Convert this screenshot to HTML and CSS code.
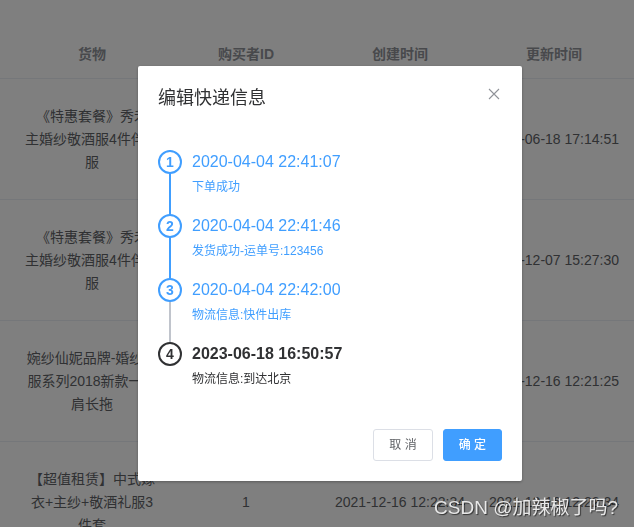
FILE: index.html
```html
<!DOCTYPE html>
<html lang="zh-CN">
<head>
<meta charset="UTF-8">
<meta name="viewport" content="width=device-width, initial-scale=1.0">
<title>订单管理</title>
<link rel="stylesheet" href="styles.css">
</head>
<body>

<div class="page">
    <table class="goods">
        <colgroup>
            <col class="col-name">
            <col class="col-mid">
            <col class="col-mid">
            <col class="col-last">
        </colgroup>
        <thead>
            <tr>
                <th>货物</th>
                <th>购买者ID</th>
                <th>创建时间</th>
                <th>更新时间</th>
            </tr>
        </thead>
        <tbody>
            <tr>
                <td>《特惠套餐》秀禾<br>主婚纱敬酒服4件伴娘<br>服</td>
                <td>1</td>
                <td>2021-12-07 15:27:30</td>
                <td>2023-06-18 17:14:51</td>
            </tr>
            <tr>
                <td>《特惠套餐》秀禾<br>主婚纱敬酒服4件伴娘<br>服</td>
                <td>1</td>
                <td>2021-12-07 15:27:30</td>
                <td>2021-12-07 15:27:30</td>
            </tr>
            <tr>
                <td>婉纱仙妮品牌-婚纱礼<br>服系列2018新款一字<br>肩长拖</td>
                <td>1</td>
                <td>2021-12-16 12:21:25</td>
                <td>2021-12-16 12:21:25</td>
            </tr>
            <tr>
                <td>【超值租赁】中式嫁<br>衣+主纱+敬酒礼服3<br>件套</td>
                <td>1</td>
                <td>2021-12-16 12:22:34</td>
                <td>2021-12-16 12:22:34</td>
            </tr>
        </tbody>
    </table>
</div>

<div class="modal"></div>

<div class="dialog-wrap">
    <div class="dialog">
        <div class="dialog-header">
            <span class="dialog-title">编辑快递信息</span>
            <button class="dialog-close" aria-label="关闭">
                <svg width="16" height="16" viewBox="0 0 16 16"><path d="M3 3 L13 13 M13 3 L3 13" stroke="#909399" stroke-width="1.1" fill="none"/></svg>
            </button>
        </div>

        <div class="dialog-body">
            <div class="steps">
                <div class="step finish">
                    <div class="step-head"><div class="step-line done"></div><div class="step-icon">1</div></div>
                    <div class="step-main">
                        <div class="step-title">2020-04-04 22:41:07</div>
                        <div class="step-desc">下单成功</div>
                    </div>
                </div>
                <div class="step finish">
                    <div class="step-head"><div class="step-line done"></div><div class="step-icon">2</div></div>
                    <div class="step-main">
                        <div class="step-title">2020-04-04 22:41:46</div>
                        <div class="step-desc">发货成功-运单号:123456</div>
                    </div>
                </div>
                <div class="step finish">
                    <div class="step-head"><div class="step-line"></div><div class="step-icon">3</div></div>
                    <div class="step-main">
                        <div class="step-title">2020-04-04 22:42:00</div>
                        <div class="step-desc">物流信息:快件出库</div>
                    </div>
                </div>
                <div class="step process">
                    <div class="step-head"><div class="step-line"></div><div class="step-icon">4</div></div>
                    <div class="step-main">
                        <div class="step-title">2023-06-18 16:50:57</div>
                        <div class="step-desc">物流信息:到达北京</div>
                    </div>
                </div>
            </div>
        </div>

        <div class="dialog-footer">
            <button class="btn">取 消</button>
            <button class="btn primary">确 定</button>
        </div>
    </div>
</div>

<div class="watermark">CSDN @加辣椒了吗?</div>

</body>
</html>
```

FILE: styles.css
```css
body { margin: 0; font-family: "Liberation Sans", Arial, "Noto Sans CJK SC", sans-serif; font-size: 14px; color: #606266; background: #fff; overflow: hidden; height: 527px; }

.page { padding-top: 31px; }
.goods { border-collapse: collapse; width: 634px; table-layout: fixed; }
.col-name { width: 169px; }
.col-mid { width: 154px; }
.col-last { width: 157px; }
.goods th, .goods td { padding: 0 10px; text-align: center; border-bottom: 1px solid #ebeef5; line-height: 23px; white-space: nowrap; overflow: visible; }
.goods th:first-child, .goods td:first-child { padding-left: 25px; }
.goods th:last-child, .goods td:last-child { padding-right: 13px; }
.goods th { padding-top: 12px; padding-bottom: 12px; color: #909399; font-weight: bold; }
.goods td { height: 120px; vertical-align: middle; }

.modal { position: fixed; left: 0; top: 0; right: 0; bottom: 0; background: #000; opacity: 0.5; }
.dialog-wrap { position: fixed; left: 0; top: 0; right: 0; bottom: 0; }
.dialog { width: 384px; margin: 66px 0 0 138px; background: #fff; border-radius: 2px; box-shadow: 0 1px 3px rgba(0, 0, 0, 0.3); }

.dialog-header { position: relative; padding: 20px 20px 10px; }
.dialog-title { font-size: 18px; line-height: 24px; color: #303133; }
.dialog-close { position: absolute; top: 20px; right: 20px; width: 16px; height: 16px; padding: 0; border: none; background: none; cursor: pointer; }
.dialog-close svg { display: block; }

.dialog-body { padding: 30px 20px; }
.steps { display: flex; flex-direction: column; }
.step { display: flex; height: 64px; }
.step:last-child { height: auto; }
.step-head { position: relative; width: 24px; flex-shrink: 0; }
.step-line { position: absolute; left: 11px; top: 0; bottom: 0; width: 2px; background: #c0c4cc; }
.step-line.done { background: #409eff; }
.step:last-child .step-line { display: none; }
.step-icon { position: relative; box-sizing: border-box; width: 24px; height: 24px; border: 2px solid; border-radius: 50%; background: #fff; display: flex; align-items: center; justify-content: center; font-size: 14px; font-weight: bold; }
.step-main { padding-left: 10px; }
.step-title { font-size: 16px; line-height: 24px; padding-bottom: 8px; }
.step-desc { font-size: 12px; line-height: 20px; margin-top: -5px; }
.finish { color: #409eff; }
.finish .step-icon { border-color: #409eff; }
.process { color: #303133; }
.process .step-icon { border-color: #303133; }
.process .step-title { font-weight: bold; }

.dialog-footer { display: flex; justify-content: flex-end; gap: 10px; padding: 10px 20px 20px; }
.btn { font-family: inherit; font-size: 12px; line-height: 12px; padding: 9px 15px; border: 1px solid #dcdfe6; border-radius: 3px; background: #fff; color: #606266; cursor: pointer; }
.btn.primary { background: #409eff; border-color: #409eff; color: #fff; font-weight: 500; }

.watermark { position: fixed; right: 16px; bottom: 8px; font-size: 19px; color: #e8e8e8; text-shadow: 1px 1px 1px rgba(0, 0, 0, 0.6); }
```
